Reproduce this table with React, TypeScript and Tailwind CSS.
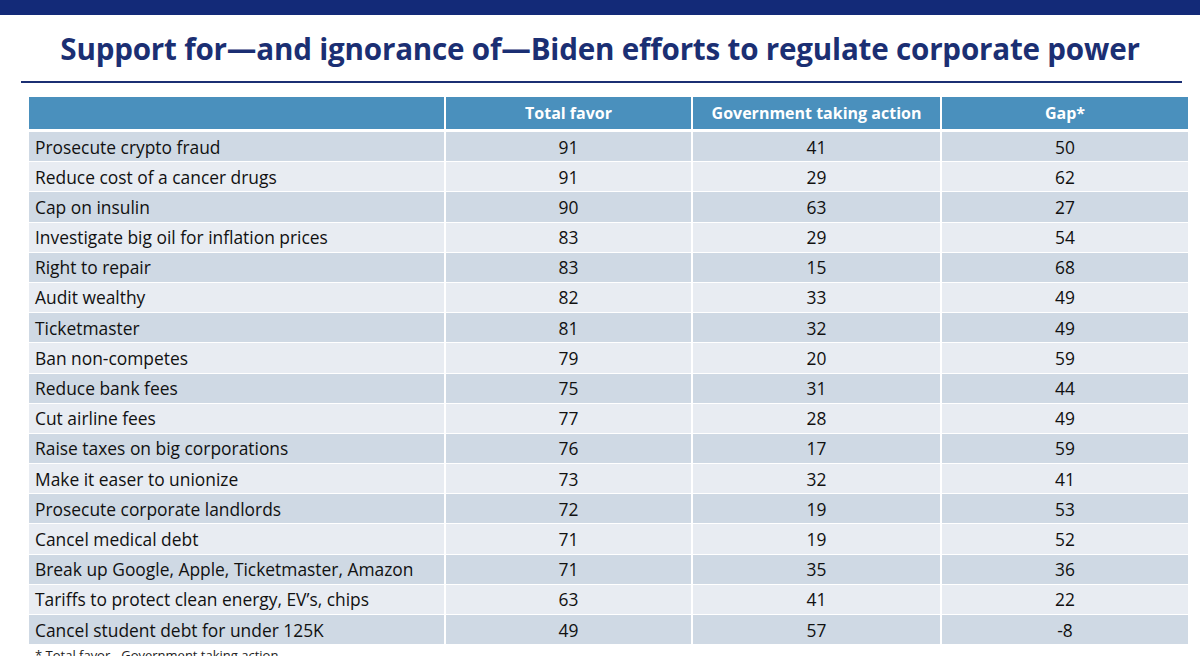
import React from "react";

const rows: [string, number, number, number][] = [
  ["Prosecute crypto fraud", 91, 41, 50],
  ["Reduce cost of a cancer drugs", 91, 29, 62],
  ["Cap on insulin", 90, 63, 27],
  ["Investigate big oil for inflation prices", 83, 29, 54],
  ["Right to repair", 83, 15, 68],
  ["Audit wealthy", 82, 33, 49],
  ["Ticketmaster", 81, 32, 49],
  ["Ban non-competes", 79, 20, 59],
  ["Reduce bank fees", 75, 31, 44],
  ["Cut airline fees", 77, 28, 49],
  ["Raise taxes on big corporations", 76, 17, 59],
  ["Make it easer to unionize", 73, 32, 41],
  ["Prosecute corporate landlords", 72, 19, 53],
  ["Cancel medical debt", 71, 19, 52],
  ["Break up Google, Apple, Ticketmaster, Amazon", 71, 35, 36],
  ["Tariffs to protect clean energy, EV\u2019s, chips", 63, 41, 22],
  ["Cancel student debt for under 125K", 49, 57, -8],
];

const font = { fontFamily: '"Open Sans", "Liberation Sans", sans-serif' };

export default function App() {
  return (
    <div className="w-[1200px] h-[656px] overflow-hidden bg-white" style={font}>
      <div className="h-[15px] bg-[#132a78]" />
      <div className="h-[66px] flex items-end justify-center pb-[17px]">
        <h1 className="text-[29.6px] font-bold text-[#1b2f73] tracking-[-0.2px] leading-none">
          Support for—and ignorance of—Biden efforts to regulate corporate power
        </h1>
      </div>
      <div className="ml-[21px] w-[1161px] h-[2px] bg-[#1b2f73]" />
      <div className="ml-[29px] mt-[14px] w-[1159px] flex flex-col gap-y-[1px]">
        <div className="flex gap-x-[2px] h-[32px] mb-[2px] bg-white">
          <div className="w-[415px] bg-[#4a90bd]" />
          <div className="w-[245px] bg-[#4a90bd] flex items-center justify-center text-white font-bold text-[16px]">Total favor</div>
          <div className="w-[247px] bg-[#4a90bd] flex items-center justify-center text-white font-bold text-[16px]">Government taking action</div>
          <div className="w-[246px] bg-[#4a90bd] flex items-center justify-center text-white font-bold text-[16px]">Gap*</div>
        </div>
        {rows.map(([label, a, b, c], i) => {
          const bg = i % 2 === 0 ? "bg-[#cfd9e4]" : "bg-[#e8ecf2]";
          return (
            <div key={label} className="flex gap-x-[2px] h-[29.2px] text-[17.4px] text-[#111]">
              <div className={`w-[415px] ${bg} flex items-center pl-[6px]`}>{label}</div>
              <div className={`w-[245px] ${bg} flex items-center justify-center`}>{a}</div>
              <div className={`w-[247px] ${bg} flex items-center justify-center`}>{b}</div>
              <div className={`w-[246px] ${bg} flex items-center justify-center`}>{c}</div>
            </div>
          );
        })}
      </div>
      <div className="ml-[35px] mt-[5px] text-[13px] text-[#222] leading-none">* Total favor - Government taking action</div>
    </div>
  );
}
